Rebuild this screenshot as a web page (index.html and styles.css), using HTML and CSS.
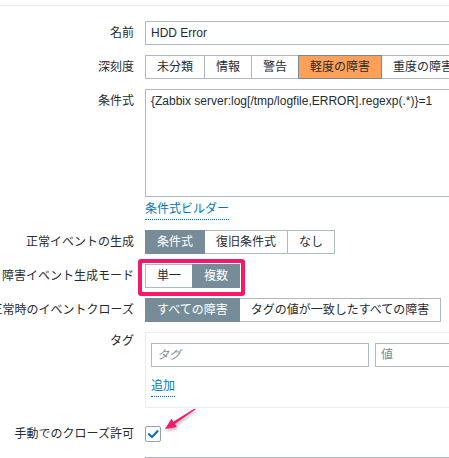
FILE: index.html
```html
<!DOCTYPE html>
<html lang="ja">
<head>
<meta charset="utf-8">
<title>Trigger</title>
<link rel="stylesheet" href="styles.css">
</head>
<body>
<div class="topline"></div>
<div class="form">
  <div class="lbl">名前</div>
  <div class="cell"><div class="input wide">HDD Error</div></div>

  <div class="lbl">深刻度</div>
  <div class="cell">
    <div class="seg">
      <span>未分類</span><span>情報</span><span>警告</span><span class="sel-orange">軽度の障害</span><span>重度の障害</span>
    </div>
  </div>

  <div class="lbl top">条件式</div>
  <div class="cell col">
    <div class="textarea">{Zabbix server:log[/tmp/logfile,ERROR].regexp(.*)}=1</div>
    <div><a class="link builder">条件式ビルダー</a></div>
  </div>

  <div class="lbl">正常イベントの生成</div>
  <div class="cell">
    <div class="seg"><span class="sel-gray">条件式</span><span>復旧条件式</span><span>なし</span></div>
  </div>

  <div class="lbl">障害イベント生成モード</div>
  <div class="cell rel">
    <div class="seg"><span>単一</span><span class="sel-gray">複数</span></div>
    <div class="hl"></div>
  </div>

  <div class="lbl">正常時のイベントクローズ</div>
  <div class="cell">
    <div class="seg"><span class="sel-gray">すべての障害</span><span>タグの値が一致したすべての障害</span></div>
  </div>

  <div class="lbl tag-lbl">タグ</div>
  <div class="cell">
    <div class="tagbox">
      <div class="tagrow">
        <div class="input tag ph italic">タグ</div>
        <div class="input val ph">値</div>
      </div>
      <div><a class="link add">追加</a></div>
    </div>
  </div>

  <div class="lbl chk-lbl">手動でのクローズ許可</div>
  <div class="cell chk-cell rel">
    <span class="checkbox">
      <svg width="14" height="14" viewBox="0 0 14 14"><polyline points="3,7.2 6,10 11.5,4.2" fill="none" stroke="#0275b8" stroke-width="2.2" stroke-linecap="round" stroke-linejoin="round"/></svg>
    </span>
    <svg class="arrow" width="40" height="30" viewBox="0 0 40 30"><polygon points="5,25 11.4,14.8 13.3,17.7 34.6,4.5 35.4,5.5 14.9,20.1 16.9,23.1" fill="#f5196c"/></svg>
  </div>

  <div class="lbl"></div>
  <div class="cell"><div class="input wide"></div></div>
</div>
</body>
</html>
```

FILE: styles.css
```css
html, body {
  margin: 0;
  padding: 0;
  overflow: hidden;
  background: #fff;
}
body {
  font-family: "Liberation Sans", Arial, "Noto Sans CJK JP", sans-serif;
  font-size: 12px;
  color: #1f2c33;
  width: 449px;
  height: 458px;
}
.topline {
  margin-top: 5px;
  height: 1px;
  background: #ebeef0;
}
.form {
  padding-top: 15px;
  display: grid;
  grid-template-columns: 134px 1fr;
  column-gap: 11px;
  row-gap: 10px;
}
.lbl {
  display: flex;
  justify-content: flex-end;
  white-space: nowrap;
  line-height: 24px;
  height: 24px;
}
.lbl.top { align-self: start; }
.lbl.tag-lbl { line-height: 18px; height: 18px; }
.lbl.chk-lbl { line-height: 16px; height: 16px; padding-top: 8px; }
.cell {
  min-width: 0;
  white-space: nowrap;
}
.rel { position: relative; }
.col { display: flex; flex-direction: column; align-items: flex-start; }
.input {
  box-sizing: border-box;
  height: 24px;
  border: 1px solid #acbbc2;
  padding: 0 5px;
  line-height: 22px;
  background: #fff;
}
.wide { width: 420px; }
.textarea {
  box-sizing: border-box;
  width: 420px;
  height: 108px;
  border: 1px solid #acbbc2;
  padding: 3px 5px;
  line-height: 16px;
}
.link {
  display: inline-block;
  color: #0275b8;
  line-height: 18px;
  padding-bottom: 1px;
  border-bottom: 1px dotted #0275b8;
  cursor: pointer;
}
.builder { margin-top: 3px; }
.seg { display: flex; }
.seg span {
  flex: none;
  box-sizing: border-box;
  height: 24px;
  line-height: 22px;
  padding: 0 11px;
  border: 1px solid #acbbc2;
  margin-left: -1px;
  background: #fff;
  position: relative;
}
.seg span:first-child { margin-left: 0; }
.seg .sel-gray {
  background: #768d99;
  border-color: #768d99;
  color: #fff;
  z-index: 1;
}
.seg .sel-orange {
  background: #ffa059;
  border-color: #768d99;
  z-index: 1;
}
.hl {
  position: absolute;
  left: -7px;
  top: -5px;
  width: 107px;
  height: 37px;
  box-sizing: border-box;
  border: 4px solid #f5196c;
  border-radius: 3px;
}
.tagbox {
  box-sizing: border-box;
  width: 420px;
  border: 1px solid #ebeef0;
  padding: 10px 5px 10px 5px;
}
.tagrow { display: flex; gap: 6px; }
.tag { width: 218px; flex: none; }
.val { width: 200px; flex: none; }
.ph { color: #7b8c96; }
.italic { font-style: italic; }
.add { margin-top: 10px; }
.chk-cell { padding-top: 8px; padding-bottom: 5px; height: 16px; }
.checkbox {
  display: block;
  box-sizing: border-box;
  width: 16px;
  height: 16px;
  border: 1px solid #8fa1aa;
  border-radius: 2px;
  background: #fff;
}
.checkbox svg { display: block; margin: 0; }
.arrow {
  position: absolute;
  left: 15px;
  top: -14px;
  filter: drop-shadow(1px 2px 1.5px rgba(0,0,0,0.3));
}
```
